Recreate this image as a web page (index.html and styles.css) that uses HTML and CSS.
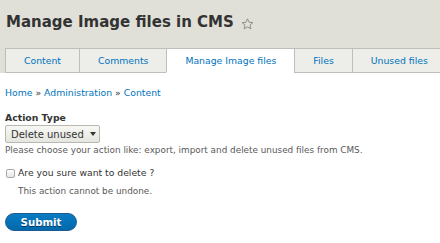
FILE: index.html
```html
<!DOCTYPE html>
<html lang="en">
<head>
    <meta charset="UTF-8">
    <title>Manage Image files in CMS</title>
    <link rel="stylesheet" href="styles.css">
</head>
<body>
    <div class="header">
        <h1 class="page-title">
            <span>Manage Image files in CMS</span>
            <svg class="star" width="13" height="12" viewBox="0 0 13 12">
                <polygon points="6.5,0.8 8.1,4.3 11.9,4.6 9,7.1 9.9,10.9 6.5,8.9 3.1,10.9 4,7.1 1.1,4.6 4.9,4.3" fill="none" stroke="#8f8f88" stroke-width="1"/>
            </svg>
        </h1>
        <ul class="tabs">
            <li><a href="#">Content</a></li>
            <li><a href="#">Comments</a></li>
            <li class="active"><a href="#">Manage Image files</a></li>
            <li><a href="#">Files</a></li>
            <li><a href="#">Unused files</a></li>
        </ul>
    </div>
    <div class="content">
        <div class="breadcrumb">
            <a href="#">Home</a> &raquo; <a href="#">Administration</a> &raquo; <a href="#">Content</a>
        </div>
        <form>
            <div class="form-item">
                <label class="form-label">Action Type</label>
                <div class="select">
                    <span>Delete unused</span>
                    <svg class="arrow" width="6" height="4" viewBox="0 0 6 4"><polygon points="0,0 6,0 3,4" fill="#333"/></svg>
                </div>
                <div class="description">Please choose your action like: export, import and delete unused files from CMS.</div>
            </div>
            <div class="form-item">
                <div class="check-row">
                    <span class="checkbox"></span>
                    <label>Are you sure want to delete ?</label>
                </div>
                <div class="description indent">This action cannot be undone.</div>
            </div>
            <button type="submit" class="button-primary">Submit</button>
        </form>
    </div>
</body>
</html>
```

FILE: styles.css
```css
body {
    margin: 0;
    font-family: "DejaVu Sans", sans-serif;
    color: #333;
    background: #fff;
}
.header {
    background-color: #e0e0d8;
    padding: 13px 0 0 6px;
    overflow: hidden;
}
.page-title {
    margin: 0 0 17px 0;
    font-size: 15px;
    font-weight: bold;
    color: #333;
    white-space: nowrap;
    line-height: 18px;
    display: flex;
    align-items: center;
    gap: 7px;
}
.star {
    margin-top: 3px;
}
.tabs {
    list-style: none;
    margin: 0 0 0 -1px;
    padding: 0;
    display: flex;
    white-space: nowrap;
}
.tabs li {
    flex: none;
    background-color: #ededea;
    border: 1px solid #bfbfba;
    margin-right: -1px;
    height: 23px;
    line-height: 23px;
}
.tabs li.active {
    background-color: #fff;
    border-bottom-color: #fff;
}
.tabs a {
    display: block;
    padding: 0 18px;
    color: #0074bd;
    text-decoration: none;
    font-size: 9.3px;
}
.content {
    padding: 14px 5px 0 5px;
}
.breadcrumb {
    font-size: 9.3px;
    line-height: 12px;
    color: #333;
    margin-bottom: 13px;
}
.breadcrumb a {
    color: #0074bd;
    text-decoration: none;
}
.form-item {
    margin-bottom: 11px;
}
.form-label {
    display: block;
    font-weight: bold;
    font-size: 9.3px;
    line-height: 12px;
    margin-bottom: 1px;
}
.select {
    display: flex;
    align-items: center;
    justify-content: space-between;
    box-sizing: border-box;
    width: 95px;
    height: 18px;
    border: 1px solid #b8b8b0;
    border-radius: 2px;
    background: linear-gradient(#f7f7f4, #e6e6e0);
    font-size: 10px;
    padding: 0 3px 0 5px;
}
.description {
    font-size: 8.85px;
    line-height: 11px;
    color: #595959;
    margin-top: 2px;
}
.check-row {
    display: flex;
    align-items: center;
    gap: 3px;
    font-size: 9.25px;
    line-height: 12px;
    padding-left: 1px;
}
.checkbox {
    box-sizing: border-box;
    width: 9px;
    height: 9px;
    border: 1px solid #a8a8a8;
    border-radius: 2px;
    background: linear-gradient(#fff, #e6e6e6);
}
.indent {
    margin-left: 13px;
    margin-top: 7px;
}
.button-primary {
    display: block;
    margin-top: 16px;
    background: linear-gradient(#0a7ac2, #0069ad);
    color: #fff;
    border: 1px solid #1e5c90;
    border-radius: 9px;
    font-family: "DejaVu Sans", sans-serif;
    font-weight: bold;
    font-size: 10.2px;
    width: 72px;
    height: 18px;
    padding: 0;
    text-shadow: 0 1px rgba(0,0,0,0.5);
}
```
